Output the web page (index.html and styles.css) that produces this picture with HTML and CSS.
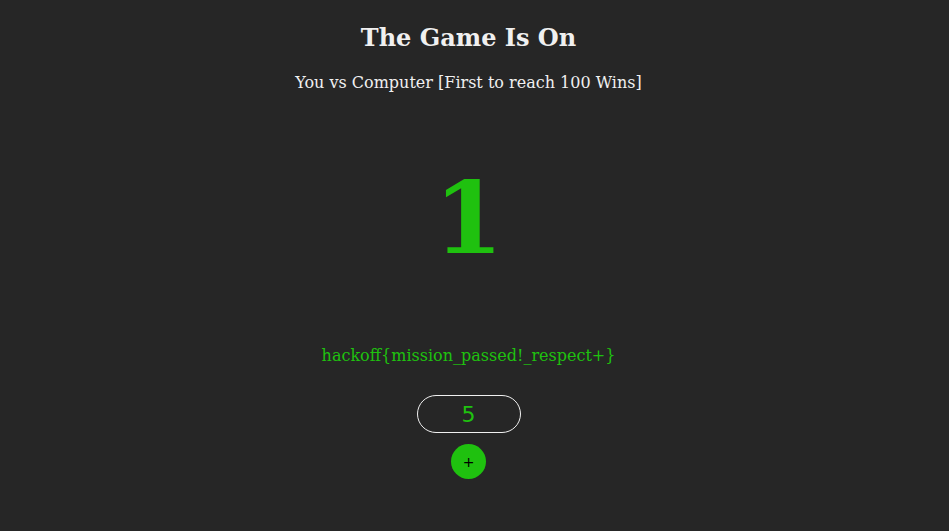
FILE: index.html
```html
<!DOCTYPE html>
<html>
<head>
<meta charset="utf-8">
<link rel="stylesheet" href="styles.css">
</head>
<body>
<main class="game">
  <h2 class="title">The Game Is On</h2>
  <p class="subtitle">You vs Computer [First to reach 100 Wins]</p>
  <div class="score">1</div>
  <p class="flag">hackoff{mission_passed!_respect+}</p>
  <div class="controls">
    <input class="num" type="text" value="5">
    <button class="plus">+</button>
  </div>
</main>
</body>
</html>
```
FILE: styles.css
```css
html, body {
  margin: 0;
  padding: 0;
  background: #262626;
}
body {
  font-family: "DejaVu Serif", serif;
  color: #f0f0f0;
}
.game {
  display: flex;
  flex-direction: column;
  align-items: center;
  padding-top: 24px;
  padding-right: 12px;
}
.title {
  margin: 0;
  font-size: 24px;
  font-weight: bold;
  line-height: 28px;
}
.subtitle {
  margin: 21px 0 0;
  font-size: 16px;
  line-height: 20px;
}
.score {
  margin-top: 65px;
  font-family: "DejaVu Serif", serif;
  font-weight: bold;
  font-size: 100px;
  line-height: 120px;
  color: #1fc10f;
}
.flag {
  margin: 68px 0 0;
  font-size: 16px;
  line-height: 20px;
  color: #1fc10f;
}
.controls {
  margin-top: 29px;
  display: flex;
  flex-direction: column;
  align-items: center;
  gap: 11px;
}
.num {
  box-sizing: border-box;
  width: 104px;
  height: 38px;
  border: 1px solid #f0f0f0;
  border-radius: 19px;
  background: transparent;
  color: #1fc10f;
  font-family: "DejaVu Sans", sans-serif;
  font-size: 22px;
  text-align: center;
  outline: none;
  padding: 0;
}
.plus {
  width: 35px;
  height: 35px;
  border-radius: 50%;
  border: none;
  background: #1fc10f;
  color: #000;
  font-family: "DejaVu Sans", sans-serif;
  font-size: 14px;
  padding: 0;
}
```
